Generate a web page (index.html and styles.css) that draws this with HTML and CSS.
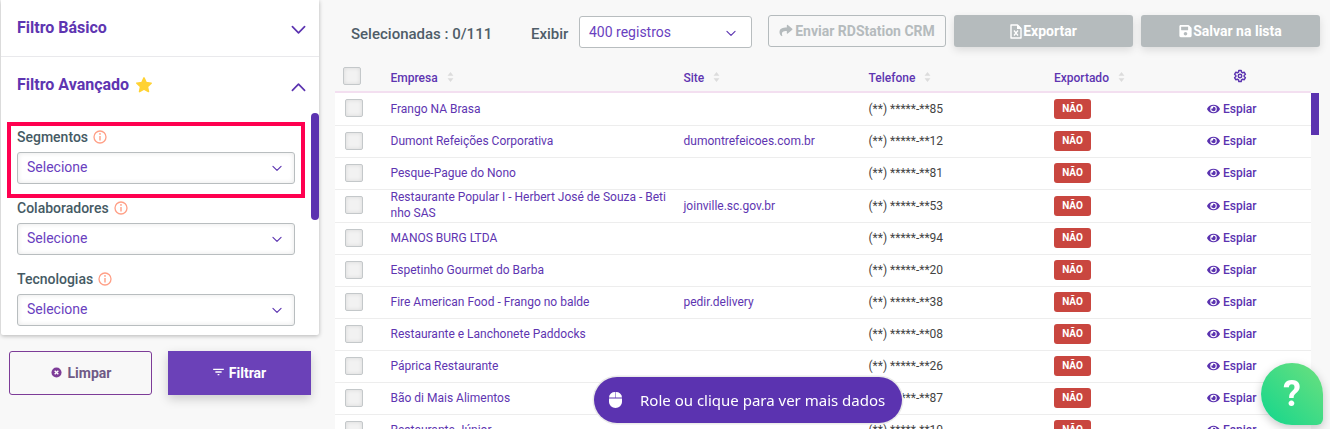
FILE: index.html
```html
<!DOCTYPE html>
<html lang="pt-BR">
<head>
<meta charset="utf-8">
<title>Empresas</title>
<link rel="stylesheet" href="styles.css">
</head>
<body>
<svg class="defs" width="0" height="0">
  <symbol id="eye" viewBox="0 0 576 512"><path fill="currentColor" d="M572.52 241.4C518.29 135.59 410.93 64 288 64S57.68 135.64 3.48 241.41a32.35 32.35 0 0 0 0 29.19C57.71 376.41 165.07 448 288 448s230.32-71.64 284.52-177.41a32.35 32.35 0 0 0 0-29.19zM288 400a144 144 0 1 1 144-144 143.93 143.93 0 0 1-144 144zm0-240a95.31 95.31 0 0 0-25.31 3.79 47.85 47.85 0 0 1-66.9 66.9A95.78 95.78 0 1 0 288 160z"/></symbol>
  <symbol id="sort" viewBox="0 0 8 12"><path fill="#dcdcdc" d="M4 0l3.5 4.5h-7zM4 12L.5 7.500h7z"/></symbol>
  <symbol id="chev" viewBox="0 0 16 10"><path fill="none" stroke="currentColor" stroke-width="1.8" stroke-linecap="round" stroke-linejoin="round" d="M1.500 1.500L8 8l6.500-6.500"/></symbol>
  <symbol id="info" viewBox="0 0 14 14"><circle cx="7" cy="7" r="6" fill="none" stroke="#ff9f86" stroke-width="1.300"/><path fill="none" stroke="#ff9f86" stroke-width="1.400" d="M7 6v4.500"/><circle cx="7" cy="3.900" r=".9" fill="#ff9f86"/></symbol>
</svg>

<div class="page">
  <aside class="side">
    <div class="card">
      <div class="acc acc-basic">
        <span class="acc-title">Filtro Básico</span>
        <svg class="acc-chev"><use href="#chev"/></svg>
      </div>
      <div class="acc acc-adv">
        <span class="acc-title">Filtro Avançado</span>
        <svg class="star" viewBox="0 0 24 24"><path fill="#ffd233" stroke="#ffd233" stroke-width="2" stroke-linejoin="round" d="M12 2.500l2.900 6.200 6.700.8-5 4.600 1.400 6.700-6-3.400-6 3.400 1.400-6.700-5-4.600 6.700-.8z"/></svg>
        <svg class="acc-chev up"><use href="#chev"/></svg>
      </div>
      <div class="fields">
        <div class="field marked">
          <div class="lbl">Segmentos <svg class="ico-info"><use href="#info"/></svg></div>
          <div class="pick">Selecione <svg class="pick-chev"><use href="#chev"/></svg></div>
        </div>
        <div class="field">
          <div class="lbl">Colaboradores <svg class="ico-info"><use href="#info"/></svg></div>
          <div class="pick">Selecione <svg class="pick-chev"><use href="#chev"/></svg></div>
        </div>
        <div class="field">
          <div class="lbl">Tecnologias <svg class="ico-info"><use href="#info"/></svg></div>
          <div class="pick">Selecione <svg class="pick-chev"><use href="#chev"/></svg></div>
        </div>
      </div>
      <div class="thumb thumb-side"></div>
    </div>
    <div class="side-actions">
      <button class="btn-clear">
        <svg class="ico-x" viewBox="0 0 12 12"><circle cx="6" cy="6" r="5.500" fill="#7d3c98"/><path stroke="#fff" stroke-width="1.500" d="M4 4l4 4M8 4l-4 4"/></svg>
        Limpar
      </button>
      <button class="btn-filter">
        <svg class="ico-f" viewBox="0 0 12 9"><path stroke="#fff" stroke-width="1.500" d="M0 1.500h12M2.500 4.500h7M5 7.500h2"/></svg>
        Filtrar
      </button>
    </div>
  </aside>

  <main class="main">
    <div class="toolbar">
      <span class="sel-count">Selecionadas : 0/111</span>
      <span class="show-lbl">Exibir</span>
      <div class="show-pick">400 registros <svg class="pick-chev"><use href="#chev"/></svg></div>
      <button class="btn-rd">
        <svg class="ico-share" viewBox="0 0 512 512"><path fill="currentColor" d="M503.700 189.800L327.700 37.900C312.300 24.500 288 35.300 288 56v80.100C127.400 137.900 0 170.100 0 322.300c0 61.400 39.600 122.300 83.300 154.100 13.700 9.900 33.100-2.500 28.100-18.600C66 312.800 132.900 274.300 288 272.100V360c0 20.700 24.300 31.500 39.700 18.200l176-152c11.100-9.600 11.100-26.800 0-36.400z"/></svg>
        Enviar RDStation CRM
      </button>
      <button class="btn-solid">
        <svg class="ico-file" viewBox="0 0 12 15"><path fill="none" stroke="#fff" stroke-width="1.400" stroke-linejoin="round" d="M1 1h6.500L11 4.500V14H1z"/><path fill="#fff" d="M7 1h1l3 3v1H7z"/><path stroke="#fff" stroke-width="1.300" d="M4 6.500l4 5M8 6.500l-4 5"/></svg>Exportar
      </button>
      <button class="btn-solid">
        <svg class="ico-save" viewBox="0 0 448 512"><path fill="#fff" d="M433.900 129.900l-83.900-83.900A48 48 0 0 0 316.100 32H48C21.500 32 0 53.500 0 80v352c0 26.500 21.500 48 48 48h352c26.500 0 48-21.500 48-48V163.900a48 48 0 0 0-14.100-34zM224 416c-35.300 0-64-28.700-64-64 0-35.300 28.700-64 64-64s64 28.700 64 64c0 35.300-28.700 64-64 64zm96-304.500V212c0 6.600-5.400 12-12 12H76c-6.600 0-12-5.400-12-12V108c0-6.600 5.400-12 12-12h228.500c3.200 0 6.200 1.300 8.500 3.500l3.500 3.500c2.200 2.200 3.500 5.300 3.500 8.500z"/></svg>Salvar na lista
      </button>
    </div>

    <table class="grid">
      <colgroup>
        <col class="c-check"><col class="c-name"><col class="c-site"><col class="c-phone"><col class="c-exp"><col class="c-act">
      </colgroup>
      <thead>
        <tr>
          <th><span class="box box-head"></span></th>
          <th>Empresa<svg class="sort"><use href="#sort"/></svg></th>
          <th>Site<svg class="sort"><use href="#sort"/></svg></th>
          <th>Telefone<svg class="sort"><use href="#sort"/></svg></th>
          <th>Exportado<svg class="sort"><use href="#sort"/></svg></th>
          <th class="th-gear"><svg class="gear" viewBox="0 0 24 24"><path fill="none" stroke="#5b33b0" stroke-width="2.500" stroke-linejoin="round" d="M10 2.500h4l.6 2.900 1.900 1.100 2.800-.9 2 3.400-2.200 2v2l2.200 2-2 3.400-2.800-.9-1.900 1.100-.6 2.900h-4l-.6-2.900-1.900-1.100-2.800.9-2-3.400 2.200-2v-2l-2.200-2 2-3.400 2.800.9 1.900-1.100z"/><circle cx="12" cy="12" r="3" fill="none" stroke="#5b33b0" stroke-width="2.500"/></svg></th>
        </tr>
      </thead>
      <tbody>
        <tr><td><span class="box"></span></td><td class="link">Frango NA Brasa</td><td class="link"></td><td class="ph">(**) *****-**85</td><td><span class="no">NÃO</span></td><td class="act"><svg class="eye"><use href="#eye"/></svg>Espiar</td></tr>
        <tr><td><span class="box"></span></td><td class="link">Dumont Refeições Corporativa</td><td class="link">dumontrefeicoes.com.br</td><td class="ph">(**) *****-**12</td><td><span class="no">NÃO</span></td><td class="act"><svg class="eye"><use href="#eye"/></svg>Espiar</td></tr>
        <tr><td><span class="box"></span></td><td class="link">Pesque-Pague do Nono</td><td class="link"></td><td class="ph">(**) *****-**81</td><td><span class="no">NÃO</span></td><td class="act"><svg class="eye"><use href="#eye"/></svg>Espiar</td></tr>
        <tr><td><span class="box"></span></td><td class="link wrap">Restaurante Popular I - Herbert José de Souza - Betinho SAS</td><td class="link">joinville.sc.gov.br</td><td class="ph">(**) *****-**53</td><td><span class="no">NÃO</span></td><td class="act"><svg class="eye"><use href="#eye"/></svg>Espiar</td></tr>
        <tr><td><span class="box"></span></td><td class="link">MANOS BURG LTDA</td><td class="link"></td><td class="ph">(**) *****-**94</td><td><span class="no">NÃO</span></td><td class="act"><svg class="eye"><use href="#eye"/></svg>Espiar</td></tr>
        <tr><td><span class="box"></span></td><td class="link">Espetinho Gourmet do Barba</td><td class="link"></td><td class="ph">(**) *****-**20</td><td><span class="no">NÃO</span></td><td class="act"><svg class="eye"><use href="#eye"/></svg>Espiar</td></tr>
        <tr><td><span class="box"></span></td><td class="link">Fire American Food - Frango no balde</td><td class="link">pedir.delivery</td><td class="ph">(**) *****-**38</td><td><span class="no">NÃO</span></td><td class="act"><svg class="eye"><use href="#eye"/></svg>Espiar</td></tr>
        <tr><td><span class="box"></span></td><td class="link">Restaurante e Lanchonete Paddocks</td><td class="link"></td><td class="ph">(**) *****-**08</td><td><span class="no">NÃO</span></td><td class="act"><svg class="eye"><use href="#eye"/></svg>Espiar</td></tr>
        <tr><td><span class="box"></span></td><td class="link">Páprica Restaurante</td><td class="link"></td><td class="ph">(**) *****-**26</td><td><span class="no">NÃO</span></td><td class="act"><svg class="eye"><use href="#eye"/></svg>Espiar</td></tr>
        <tr><td><span class="box"></span></td><td class="link">Bão di Mais Alimentos</td><td class="link"></td><td class="ph">(**) *****-**87</td><td><span class="no">NÃO</span></td><td class="act"><svg class="eye"><use href="#eye"/></svg>Espiar</td></tr>
        <tr><td><span class="box"></span></td><td class="link">Restaurante Júnior</td><td class="link"></td><td class="ph">(**) *****-**10</td><td><span class="no">NÃO</span></td><td class="act"><svg class="eye"><use href="#eye"/></svg>Espiar</td></tr>
      </tbody>
    </table>
    <div class="thumb thumb-main"></div>
  </main>
</div>

<div class="pill">
  <svg class="mouse" viewBox="0 0 13 16"><path fill="#fff" d="M0 6.500V10a6.500 6 0 0 0 13 0V6.500z"/><path fill="#fff" d="M6.250 .1A6 5.500 0 0 0 0 5.500h6.250zM6.750 .1V5.500H13A6 5.500 0 0 0 6.750 .1z"/></svg>
  <span>Role ou clique para ver mais dados</span>
</div>
<div class="help">?</div>
</body>
</html>
```

FILE: styles.css
```css
html, body {
  margin: 0;
  height: 100%;
  overflow: hidden;
  background: #f8f8f8;
  font-family: "Roboto", "Liberation Sans", sans-serif;
}

.defs { position: absolute; }

.page {
  display: flex;
  height: 429px;
  overflow: hidden;
}

/* Sidebar */
.side {
  flex: 0 0 335px;
  padding-left: 1px;
  box-sizing: border-box;
}

.card {
  position: relative;
  width: 318px;
  height: 335px;
  box-sizing: border-box;
  background: #fff;
  border-radius: 0 0 2px 2px;
  box-shadow: 0 1px 4px rgba(0, 0, 0, .28);
}

.acc {
  display: flex;
  align-items: center;
  padding: 0 13px 0 16px;
}

.acc-basic {
  height: 57px;
  padding-bottom: 2px;
  box-sizing: border-box;
  border-bottom: 1px solid #e9e9ec;
}

.acc-adv {
  height: 65px;
  padding-bottom: 10px;
  box-sizing: border-box;
}

.acc-title {
  font-size: 16px;
  font-weight: 700;
  color: #5e35b1;
}

.star {
  width: 18px;
  height: 18px;
  margin-left: 6px;
}

.acc-chev {
  width: 15px;
  height: 10px;
  margin-left: auto;
  margin-top: 5px;
  color: #5b33b0;
}

.acc-chev.up { transform: scaleY(-1); }

.fields {
  padding: 0 24px 0 16px;
  display: flex;
  flex-direction: column;
  gap: 14px;
}

.field.marked {
  margin: 0 -10px;
  padding: 1px 6px 10px;
  border: 4px solid #ff0050;
}

.field.marked + .field { margin-top: -14px; }

.lbl {
  display: flex;
  align-items: center;
  gap: 5px;
  height: 20px;
  margin-bottom: 5px;
  font-size: 14px;
  font-weight: 500;
  color: #455a64;
}

.ico-info { width: 14px; height: 14px; }

.pick {
  display: flex;
  align-items: center;
  height: 32px;
  box-sizing: border-box;
  padding: 0 12px 2px 9px;
  border: 1px solid #b8bdbf;
  border-radius: 3px;
  background: #fff;
  box-shadow: inset 0 0 5px rgba(0, 0, 0, .1);
  font-size: 14px;
  color: #6a3fc0;
}

.pick-chev {
  width: 10px;
  height: 7px;
  margin-left: auto;
  margin-top: 2px;
  color: #5b33b0;
}

.thumb {
  position: absolute;
  background: #5b33b0;
}

.thumb-side {
  left: 310px;
  top: 113px;
  width: 8px;
  height: 107px;
  border-radius: 4px;
}

.side-actions {
  display: flex;
  gap: 16px;
  margin-top: 16px;
  padding-left: 8px;
}

.side-actions button {
  width: 143px;
  height: 44px;
  font-family: inherit;
  font-size: 14px;
  font-weight: 700;
  display: flex;
  align-items: center;
  justify-content: center;
  gap: 5px;
}

.btn-clear {
  padding: 0 0 0 1px;
  background: transparent;
  border: 1px solid #7d3c98;
  border-radius: 3px;
  color: #6f5a86;
}

.side-actions .btn-clear { gap: 6px; }

.ico-x { width: 11px; height: 11px; margin-top: -2px; }

.btn-filter {
  background: #6b41b8;
  border: 0;
  color: #fff;
  box-shadow: 0 4px 10px rgba(0, 0, 0, .18);
}

.ico-f { width: 11px; height: 8px; margin-top: -2px; }

/* Main */
.main {
  position: relative;
  flex: 1;
  min-width: 0;
}

.toolbar {
  display: flex;
  align-items: flex-start;
  height: 62px;
  padding: 15px 0 0 16px;
  box-sizing: border-box;
}

.sel-count {
  width: 180px;
  margin-top: 10px;
  font-size: 15px;
  font-weight: 500;
  color: #4f5d68;
}

.show-lbl {
  width: 48px;
  margin-top: 10px;
  font-size: 15px;
  font-weight: 500;
  color: #4f5d68;
}

.show-pick {
  display: flex;
  align-items: center;
  width: 173px;
  height: 32px;
  box-sizing: border-box;
  margin-top: 1px;
  padding: 0 15px 0 9px;
  border: 1px solid #b8bdbf;
  border-radius: 3px;
  background: #fff;
  font-size: 14px;
  color: #6a3fc0;
}

.toolbar button {
  display: flex;
  align-items: center;
  justify-content: center;
  height: 32px;
  box-sizing: border-box;
  font-family: inherit;
  font-size: 14px;
  font-weight: 700;
}

.btn-rd {
  width: 178px;
  margin: 0 8px 0 16px;
  padding: 0;
  gap: 2px;
  background: transparent;
  border: 1px solid #b5bbbd;
  border-radius: 3px;
  color: #b5bbbd;
}

.ico-share { width: 14px; height: 13px; margin-top: -1px; }

.btn-solid {
  width: 179px;
  margin-right: 8px;
  padding: 0;
  gap: 1px;
  background: #b5bbbd;
  border: 0;
  border-radius: 3px;
  color: #fff;
  box-shadow: 0 3px 8px rgba(0, 0, 0, .12);
}

.ico-file { width: 12px; height: 15px; }
.ico-save { width: 13px; height: 14px; }

/* Table */
.grid {
  table-layout: fixed;
  width: 976px;
  border-collapse: separate;
  border-spacing: 0;
  font-size: 12px;
}

.c-check { width: 55.500px; }
.c-name { width: 293px; }
.c-site { width: 185px; }
.c-phone { width: 185.500px; }
.c-exp { width: 130px; }
.c-act { width: 127px; }

th {
  height: 31px;
  padding: 3px 0 0;
  box-sizing: border-box;
  text-align: left;
  font-weight: 500;
  color: #5e35b1;
  border-bottom: 2px solid #f3dff0;
}

.sort {
  width: 7px;
  height: 10px;
  margin-left: 9px;
  vertical-align: 0;
}

.th-gear { text-align: center; }

.gear {
  display: inline-block;
  width: 14px;
  height: 14px;
  margin-right: 16px;
  vertical-align: 1px;
}

tbody tr { background: #fff; }

td {
  height: 32px;
  box-sizing: border-box;
  padding: 0 0 1px;
  border-bottom: 1px solid #ededed;
  line-height: 16px;
}

tbody tr:first-child td { height: 33px; }

.box {
  display: block;
  width: 16px;
  height: 16px;
  margin-left: 10px;
  margin-bottom: 1px;
  border: 1px solid #c4c8ca;
  border-radius: 2px;
  background: #f2f2f2;
  box-shadow: inset 0 0 4px rgba(0, 0, 0, .1);
}

.box-head {
  margin-left: 8px;
  margin-top: -4px;
  margin-bottom: 0;
}

td.link {
  color: #5e35b1;
  word-break: break-all;
  padding-right: 17px;
}

td.wrap { line-height: 15.500px; }

.ph { color: #444; }

.no {
  display: inline-block;
  width: 37px;
  height: 20px;
  line-height: 20px;
  text-align: center;
  border-radius: 3px;
  background: #c9463f;
  color: #fff;
  font-size: 10px;
  font-weight: 700;
  vertical-align: middle;
}

td.act {
  padding-left: 23px;
  color: #5b33b0;
  font-weight: 500;
  white-space: nowrap;
}

.eye {
  width: 13px;
  height: 12px;
  margin-right: 3px;
  vertical-align: -2px;
}

.thumb-main {
  left: 976px;
  top: 93px;
  width: 8px;
  height: 42px;
}

/* Floating */
.pill {
  position: fixed;
  left: 594px;
  top: 377px;
  width: 308px;
  height: 46px;
  box-sizing: border-box;
  display: flex;
  align-items: center;
  padding-left: 15px;
  background: #5b33b0;
  border-radius: 24px;
  box-shadow: 0 0 0 1.500px #eaeaea;
  color: #fff;
  font-family: "Noto Sans", sans-serif;
  font-size: 15px;
}

.mouse {
  width: 13px;
  height: 16px;
  margin-right: 18px;
}

.help {
  position: fixed;
  left: 1261px;
  top: 363px;
  width: 62px;
  height: 62px;
  display: flex;
  align-items: center;
  justify-content: center;
  border-radius: 50% 50% 6px 50%;
  background: linear-gradient(45deg, #12d68d, #6de07e);
  box-shadow: 0 3px 10px rgba(0, 0, 0, .22);
  color: #fff;
  font-size: 36px;
  font-weight: 700;
}
```
